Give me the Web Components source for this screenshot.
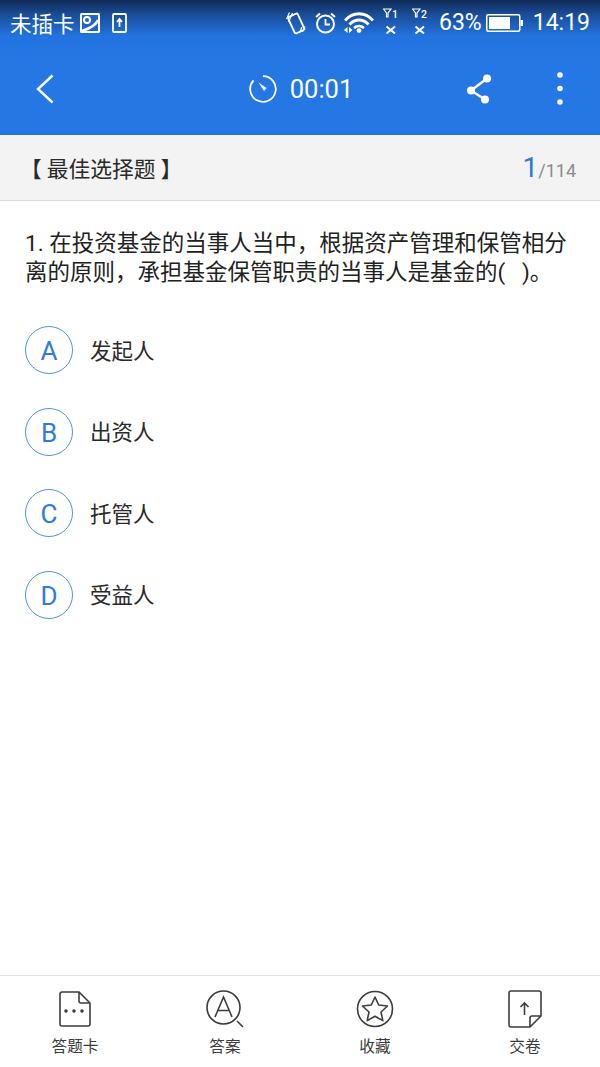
<!DOCTYPE html>
<html lang="zh">
<head>
<meta charset="utf-8">
<title>最佳选择题</title>
<style>
	html, body { margin: 0; padding: 0; height: 100%; background: #fff; }
	body {
		display: flex;
		flex-direction: column;
		width: 600px;
		height: 1067px;
		overflow: hidden;
		font-family: "Roboto", "Noto Sans CJK SC", sans-serif;
	}
</style>
</head>
<body>
	<app-header></app-header>
	<question-title count="114" current="1">【 最佳选择题 】</question-title>
	<question-body>
		<span slot="stem">1. 在投资基金的当事人当中，根据资产管理和保管相分离的原则，承担基金保管职责的当事人是基金的(&nbsp;&nbsp;&nbsp;)。</span>
		<answer-option letter="A">发起人</answer-option>
		<answer-option letter="B">出资人</answer-option>
		<answer-option letter="C">托管人</answer-option>
		<answer-option letter="D">受益人</answer-option>
	</question-body>
	<bottom-bar>
		<bar-item icon="card">答题卡</bar-item>
		<bar-item icon="answer">答案</bar-item>
		<bar-item icon="star">收藏</bar-item>
		<bar-item icon="submit">交卷</bar-item>
	</bottom-bar>

<script>
class AppHeader extends HTMLElement {
	constructor() {
		super();
		this.attachShadow({ mode: 'open' }).innerHTML = `
		<style>
			:host {
				display: block;
				flex: none;
				color: #fff;
				background: linear-gradient(#0f2a55 0, #1a4c96 14px, #2273df 36px, #2577e4 60px);
			}
			.status {
				display: flex;
				align-items: center;
				height: 45px;
				padding: 0 10px;
				font-size: 22px;
			}
			.carrier { font-size: 21.5px; margin-right: 5px; }
			.status svg { display: block; flex: none; }
			.spacer { flex: 1; }
			.signal { margin-top: -4px; }
			.pct { font-size: 23px; margin-left: 9px; }
			.time { font-size: 23px; margin-left: 10px; }
			.tools {
				display: grid;
				grid-template-columns: 1fr auto 1fr;
				align-items: center;
				box-sizing: border-box;
				height: 90px;
				padding-bottom: 3px;
			}
			.timer {
				display: flex;
				align-items: center;
				gap: 13px;
				font-size: 25.5px;
				padding-left: 2px;
			}
			.tools svg { display: block; }
			.back { padding-left: 36px; }
			.actions {
				display: flex;
				align-items: center;
				justify-content: flex-end;
				gap: 65px;
				padding-right: 37px;
			}
		</style>
		<div class="status">
			<span class="carrier">未插卡</span>
			<svg width="20" height="20" viewBox="0 0 20 20"><rect x="0" y="0" width="20" height="20" rx="1.5" fill="#fff"/><rect x="2" y="2" width="16" height="16" fill="#2163c7"/><circle cx="7" cy="7" r="3" fill="none" stroke="#fff" stroke-width="2"/><path d="M2 18 C8 16 16 13 18 7" fill="none" stroke="#fff" stroke-width="2.5"/></svg>
			<svg style="margin-left:12px" width="15" height="20" viewBox="0 0 15 20"><rect x="1" y="1" width="13" height="18" rx="1" fill="none" stroke="#fff" stroke-width="1.8"/><path d="M7.5 14 V7 M5 9 L7.5 6 L10 9" fill="none" stroke="#fff" stroke-width="1.8"/></svg>
			<span class="spacer"></span>
			<svg width="20" height="24" viewBox="0 0 20 24"><rect x="5" y="3.5" width="10.5" height="18" rx="1.5" transform="rotate(-25 10.2 12.5)" fill="none" stroke="#fff" stroke-width="1.8"/><path d="M0.5 8 L3.5 1.5 M2.5 11 L6.5 2 M16 16 L13.5 22 M19 15.5 L16.5 21" stroke="#fff" stroke-width="1.2"/></svg>
			<svg style="margin-left:9px" width="21" height="22" viewBox="0 0 21 22"><circle cx="10.5" cy="12" r="8.5" fill="none" stroke="#fff" stroke-width="2"/><path d="M10.5 7 V12.5 H15" fill="none" stroke="#fff" stroke-width="1.8"/><path d="M1 5 L5 1.5 M20 5 L16 1.5" stroke="#fff" stroke-width="2"/></svg>
			<svg style="margin-left:8px" width="30" height="21" viewBox="0 0 30 21"><path d="M1 8.5 C9 -0.5 21 -0.5 29 8.5 M5.5 12.5 C11 6.5 19 6.5 24.5 12.5 M10 16 C13 13.5 17 13.5 20 16" fill="none" stroke="#fff" stroke-width="2.8"/><circle cx="15" cy="18.6" r="2.4" fill="#fff"/><path d="M3.5 15 V21 L0 18 Z M5 15 L8.5 18 L5 21 Z" fill="#fff"/></svg>
			<svg class="signal" style="margin-left:9px" width="18" height="26" viewBox="0 0 18 26"><path d="M0.5 1 H8 L5 5 V9 H3.5 V5 Z" fill="none" stroke="#fff" stroke-width="1.2"/><text x="9" y="9.5" font-size="10.5" font-weight="500" fill="#fff" font-family="Roboto">1</text><path d="M3.5 18.5 L12 25.5 M12 18.5 L3.5 25.5" stroke="#fff" stroke-width="2"/></svg>
			<svg class="signal" style="margin-left:11px" width="18" height="26" viewBox="0 0 18 26"><path d="M0.5 1 H8 L5 5 V9 H3.5 V5 Z" fill="none" stroke="#fff" stroke-width="1.2"/><text x="9" y="9.5" font-size="10.5" font-weight="500" fill="#fff" font-family="Roboto">2</text><path d="M3.5 18.5 L12 25.5 M12 18.5 L3.5 25.5" stroke="#fff" stroke-width="2"/></svg>
			<span class="pct">63%</span>
			<svg style="margin-left:4px" width="37" height="18" viewBox="0 0 37 18"><rect x=".75" y=".75" width="33" height="16.5" rx="1.5" fill="none" stroke="#fff" stroke-width="1.5"/><rect x="3" y="3" width="21" height="12" fill="#fff"/><rect x="34.5" y="6" width="2.5" height="6" fill="#fff"/></svg>
			<span class="time">14:19</span>
		</div>
		<div class="tools">
			<div class="back">
				<svg width="18" height="30" viewBox="0 0 18 30"><path d="M16.5 1.5 L2 15 L16.5 28.5" fill="none" stroke="#fff" stroke-width="2.4"/></svg>
			</div>
			<div class="timer">
				<svg width="28" height="28" viewBox="0 0 28 28"><path d="M14 1.2 A12.8 12.8 0 1 1 4.5 5.4" fill="none" stroke="#fff" stroke-width="1.8"/><path d="M9.5 7.5 L17.5 13 L15 16 Z" fill="#fff"/></svg>
				<span>00:01</span>
			</div>
			<div class="actions">
				<svg width="26" height="30" viewBox="0 0 26 30"><path d="M21 4.5 L5 16.5 L19 25.5" fill="none" stroke="#fff" stroke-width="2.4"/><circle cx="21" cy="4.5" r="4" fill="#fff"/><circle cx="5" cy="16.5" r="4" fill="#fff"/><circle cx="19" cy="25.5" r="4" fill="#fff"/></svg>
				<svg width="6" height="33" viewBox="0 0 6 33"><circle cx="3" cy="3" r="2.8" fill="#fff"/><circle cx="3" cy="16.5" r="2.8" fill="#fff"/><circle cx="3" cy="30" r="2.8" fill="#fff"/></svg>
			</div>
		</div>`;
	}
}

class QuestionTitle extends HTMLElement {
	constructor() {
		super();
		this.attachShadow({ mode: 'open' }).innerHTML = `
		<style>
			:host {
				display: flex;
				flex: none;
				align-items: center;
				justify-content: space-between;
				box-sizing: border-box;
				height: 66px;
				padding: 0 24px 0 20px;
				background: #f3f3f3;
				border-bottom: 1px solid #dcdcdc;
				color: #2a2a2a;
				font-size: 21.8px;
				font-family: "Noto Sans CJK SC", sans-serif;
			}
			.page { font-family: "Roboto", sans-serif; color: #8b8b8b; font-size: 18px; }
			.page b { font-weight: 400; color: #2f78d6; font-size: 28px; }
		</style>
		<span><slot></slot></span>
		<span class="page"><b>${this.getAttribute('current')}</b>/${this.getAttribute('count')}</span>`;
	}
}

class QuestionBody extends HTMLElement {
	constructor() {
		super();
		this.attachShadow({ mode: 'open' }).innerHTML = `
		<style>
			:host {
				display: block;
				flex: 1;
				padding: 28px 25px 0;
				color: #222;
			}
			.stem {
				font-size: 22.5px;
				line-height: 29px;
				margin-bottom: 39px;
				font-family: "Roboto", "Noto Sans CJK SC", sans-serif;
			}
			.options { display: flex; flex-direction: column; gap: 33.67px; }
		</style>
		<div class="stem"><slot name="stem"></slot></div>
		<div class="options"><slot></slot></div>`;
	}
}

class AnswerOption extends HTMLElement {
	constructor() {
		super();
		this.attachShadow({ mode: 'open' }).innerHTML = `
		<style>
			:host {
				display: flex;
				align-items: center;
				gap: 17px;
				height: 48px;
				font-size: 21.5px;
				color: #2a2a2a;
				font-family: "Noto Sans CJK SC", sans-serif;
			}
			.letter {
				display: flex;
				align-items: center;
				justify-content: center;
				box-sizing: border-box;
				width: 48px;
				height: 48px;
				padding-top: 2px;
				border: 1px solid #4f94dc;
				border-radius: 50%;
				color: #2f7bdc;
				font-size: 26px;
				font-family: "Roboto", sans-serif;
			}
			.label { margin-top: -2px; }
		</style>
		<span class="letter">${this.getAttribute('letter')}</span>
		<span class="label"><slot></slot></span>`;
	}
}

class BottomBar extends HTMLElement {
	constructor() {
		super();
		this.attachShadow({ mode: 'open' }).innerHTML = `
		<style>
			:host {
				display: grid;
				flex: none;
				grid-template-columns: repeat(4, 1fr);
				box-sizing: border-box;
				height: 92px;
				border-top: 1px solid #e2e2e2;
				background: #fff;
			}
		</style>
		<slot></slot>`;
	}
}

const barIcons = {
	card: `<svg width="32" height="36" viewBox="0 0 32 36"><path d="M3 1 H20 L31 12 V33 A2 2 0 0 1 29 35 H3 A2 2 0 0 1 1 33 V3 A2 2 0 0 1 3 1 Z" fill="none" stroke="#3d3d3d" stroke-width="1.6"/><path d="M20 1 V10 A2 2 0 0 0 22 12 H31" fill="none" stroke="#3d3d3d" stroke-width="1.6"/><circle cx="7" cy="20" r="1.8" fill="#3d3d3d"/><circle cx="15" cy="20" r="1.8" fill="#3d3d3d"/><circle cx="23" cy="20" r="1.8" fill="#3d3d3d"/></svg>`,
	answer: `<svg width="38" height="38" viewBox="0 0 38 38"><circle cx="17.5" cy="17.5" r="16.5" fill="none" stroke="#3d3d3d" stroke-width="1.6"/><path d="M9 27 L17.5 7 L26 27 M11.8 20.5 H23.2" fill="none" stroke="#3d3d3d" stroke-width="1.6"/><path d="M31 31 L37 37" stroke="#3d3d3d" stroke-width="1.6"/></svg>`,
	star: `<svg width="38" height="38" viewBox="0 0 38 38"><circle cx="19" cy="19" r="17.5" fill="none" stroke="#3d3d3d" stroke-width="1.6"/><path d="M19 7 L22.7 15 L31.5 16 L25 22 L26.8 30.6 L19 26.2 L11.2 30.6 L13 22 L6.5 16 L15.3 15 Z" fill="none" stroke="#3d3d3d" stroke-width="1.6" stroke-linejoin="round"/></svg>`,
	submit: `<svg width="34" height="38" viewBox="0 0 34 38"><path d="M3 1 H31 A2 2 0 0 1 33 3 V26 L22 37 H3 A2 2 0 0 1 1 35 V3 A2 2 0 0 1 3 1 Z" fill="none" stroke="#3d3d3d" stroke-width="1.6"/><path d="M33 26 H24 A2 2 0 0 0 22 28 V37" fill="none" stroke="#3d3d3d" stroke-width="1.6"/><path d="M16.5 25 V13 M12.5 17 L16.5 13 L20.5 17" fill="none" stroke="#3d3d3d" stroke-width="1.6"/></svg>`
};

class BarItem extends HTMLElement {
	constructor() {
		super();
		this.attachShadow({ mode: 'open' }).innerHTML = `
		<style>
			:host {
				display: flex;
				flex-direction: column;
				align-items: center;
				color: #3c3c3c;
				font-size: 15.7px;
				font-family: "Noto Sans CJK SC", sans-serif;
			}
			.icon {
				display: flex;
				align-items: center;
				justify-content: center;
				height: 38px;
				margin-top: 14px;
				margin-bottom: 6px;
			}
			.icon svg { display: block; }
		</style>
		<span class="icon">${barIcons[this.getAttribute('icon')]}</span>
		<span><slot></slot></span>`;
	}
}

customElements.define('app-header', AppHeader);
customElements.define('question-title', QuestionTitle);
customElements.define('question-body', QuestionBody);
customElements.define('answer-option', AnswerOption);
customElements.define('bottom-bar', BottomBar);
customElements.define('bar-item', BarItem);
</script>
</body>
</html>
